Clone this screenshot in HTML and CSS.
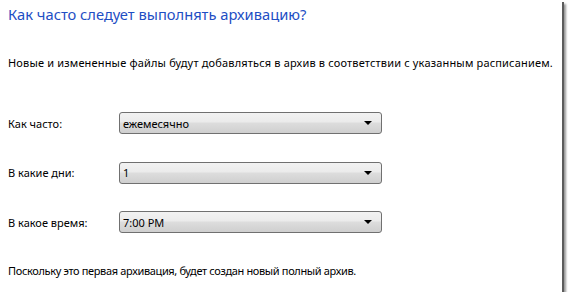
FILE: index.html
```html
<!DOCTYPE html>
<html>
<head>
  <title>Архивация</title>
  <link rel="stylesheet" href="styles.css">
</head>
<body>
  <div class="panel">
    <h1 class="title">Как часто следует выполнять архивацию?</h1>
    <p class="intro">Новые и измененные файлы будут добавляться в архив в соответствии с указанным расписанием.</p>

    <div class="rows">
      <div class="row">
        <span class="label">Как часто:</span>
        <div class="combo">
          <span class="value">ежемесячно</span>
          <span class="arrow"></span>
        </div>
      </div>
      <div class="row">
        <span class="label">В какие дни:</span>
        <div class="combo">
          <span class="value">1</span>
          <span class="arrow"></span>
        </div>
      </div>
      <div class="row">
        <span class="label">В какое время:</span>
        <div class="combo">
          <span class="value">7:00 PM</span>
          <span class="arrow"></span>
        </div>
      </div>
    </div>

    <p class="note">Поскольку это первая архивация, будет создан новый полный архив.</p>
  </div>
</body>
</html>
```

FILE: styles.css
```css
body {
  margin: 0;
  padding: 0;
  background: #fff;
  font-family: "Noto Sans", "Open Sans", sans-serif;
  font-size: 11px;
  color: #000;
}

.panel {
  width: 554px;
  height: 292px;
  padding-left: 8px;
  box-sizing: content-box;
  background: #fff;
  box-shadow: 2px 2px 0 #5c5c5c, 4px 4px 2px #9a9a9a;
  display: flex;
  flex-direction: column;
  white-space: nowrap;
}

.title {
  margin: 4px 0 0;
  font-size: 14.7px;
  font-weight: normal;
  line-height: 20px;
  color: #1e4ec4;
}

.intro {
  margin: 31px 0 0;
  line-height: 16px;
  letter-spacing: 0.17px;
}

.rows {
  margin-top: 41px;
  display: flex;
  flex-direction: column;
  gap: 27.5px;
}

.row {
  display: grid;
  grid-template-columns: 111px 263px;
  align-items: center;
}

.combo {
  height: 20px;
  border: 1px solid #707070;
  border-radius: 3px;
  background: linear-gradient(#f2f2f2 0%, #ebebeb 45%, #dddddd 50%, #cfcfcf 100%);
  display: flex;
  align-items: center;
  justify-content: space-between;
  padding: 0 9px 0 3px;
}

.arrow {
  width: 0;
  height: 0;
  border-left: 4px solid transparent;
  border-right: 4px solid transparent;
  border-top: 4px solid #000;
}

.note {
  margin: 30px 0 0;
  line-height: 16px;
  letter-spacing: -0.35px;
}
```
